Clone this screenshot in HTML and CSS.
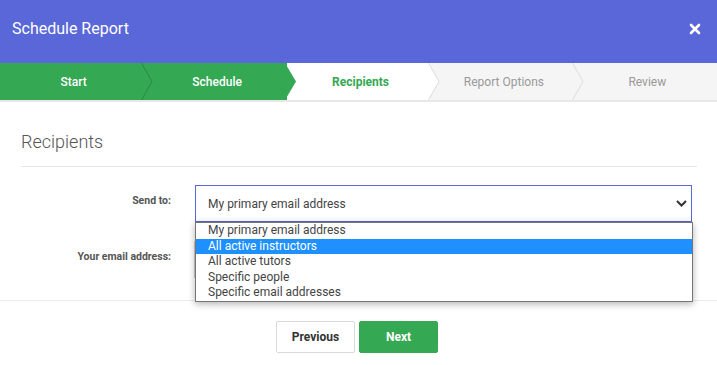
FILE: index.html
```html
<!DOCTYPE html>
<html lang="en">
<head>
<meta charset="utf-8">
<title>Schedule Report</title>
<link rel="stylesheet" href="styles.css">
</head>
<body>
<div class="modal">
  <header class="modal-header">
    <h1 class="modal-title">Schedule Report</h1>
    <button class="close" aria-label="Close">
      <svg width="12" height="12" viewBox="0 0 12 12"><path d="M2 2 L10 10 M10 2 L2 10" stroke="#fff" stroke-width="2.6" stroke-linecap="round"/></svg>
    </button>
  </header>

  <nav class="steps">
    <div class="step done">Start
      <svg class="sep" width="12" height="37" viewBox="0 0 12 37"><polyline points="0.5,0 11,18.5 0.5,37" fill="none" stroke="#2a8a43" stroke-width="1"/></svg>
    </div>
    <div class="step done">Schedule
      <svg class="sep" width="12" height="37" viewBox="0 0 12 37"><polygon points="0,0 11,18.5 0,37" fill="#34a853"/></svg>
    </div>
    <div class="step active">Recipients
      <svg class="sep" width="12" height="37" viewBox="0 0 12 37"><polygon points="0,0 11,18.5 0,37" fill="#fff"/><polyline points="0.5,0 11,18.5 0.5,37" fill="none" stroke="#dcdcdc" stroke-width="1"/></svg>
    </div>
    <div class="step todo">Report Options
      <svg class="sep" width="12" height="37" viewBox="0 0 12 37"><polyline points="0.5,0 11,18.5 0.5,37" fill="none" stroke="#dcdcdc" stroke-width="1"/></svg>
    </div>
    <div class="step todo">Review</div>
  </nav>

  <main class="content">
    <h2 class="section-title">Recipients</h2>
    <div class="form">
      <div class="row">
        <label class="label">Send to:</label>
        <div class="field">
          <div class="select">
            <span>My primary email address</span>
            <svg class="chev" width="11" height="7" viewBox="0 0 11 7"><polyline points="1,1 5.5,5.5 10,1" fill="none" stroke="#333" stroke-width="2"/></svg>
          </div>
          <ul class="dropdown">
            <li>My primary email address</li>
            <li class="hl">All active instructors</li>
            <li>All active tutors</li>
            <li>Specific people</li>
            <li>Specific email addresses</li>
          </ul>
        </div>
      </div>
      <div class="row">
        <label class="label">Your email address:</label>
        <div class="field">
          <div class="input"></div>
        </div>
      </div>
    </div>
  </main>

  <footer class="footer">
    <button class="btn btn-default">Previous</button>
    <button class="btn btn-primary">Next</button>
  </footer>
</div>
</body>
</html>
```

FILE: styles.css
```css
* { box-sizing: border-box; }
html, body { margin: 0; padding: 0; }
body {
  font-family: Roboto, "Liberation Sans", Arial, sans-serif;
  background: #fff;
  color: #333;
  width: 717px;
  height: 365px;
  overflow: hidden;
}
.modal-header {
  height: 63px;
  background: #5a67d8;
  display: flex;
  align-items: center;
  padding: 0 16px 6px 12px;
}
.modal-title {
  margin: 0;
  font-size: 16px;
  font-weight: 400;
  color: #fff;
  line-height: 20px;
}
.close {
  margin-left: auto;
  background: none;
  border: 0;
  padding: 0;
  width: 12px;
  height: 12px;
  display: flex;
}
.steps {
  display: flex;
  height: 39px;
  border-bottom: 2px solid #e8e8e8;
}
.step {
  flex: 1;
  position: relative;
  display: flex;
  align-items: center;
  justify-content: center;
  font-size: 12px;
  height: 37px;
  padding-left: 4px;
}
.step.done { background: #34a853; color: #fff; font-weight: 500; }
.step.active { background: #fff; color: #34a853; font-weight: 700; }
.step.todo { background: #f5f5f5; color: #999; font-weight: 400; }
.sep {
  position: absolute;
  top: 0;
  left: calc(100% - 2px);
  z-index: 1;
  display: block;
}
.content {
  padding: 29px 20px 0 21px;
  height: 198px;
}
.section-title {
  margin: 0;
  font-size: 18px;
  font-weight: 300;
  line-height: 22px;
  color: #555;
  padding-bottom: 13px;
  border-bottom: 1px solid #e6e6e6;
}
.form {
  padding-top: 18px;
  display: flex;
  flex-direction: column;
  gap: 19px;
  padding-right: 5px;
}
.row {
  display: flex;
  align-items: flex-start;
}
.label {
  width: 150px;
  flex: none;
  text-align: right;
  font-size: 10.5px;
  font-weight: 700;
  color: #555;
  line-height: 20px;
  padding-top: 6px;
  margin-right: 24px;
}
.field {
  flex: 1;
  position: relative;
}
.select {
  height: 37px;
  border: 1px solid #5a67d8;
  display: flex;
  align-items: center;
  padding: 0 4px 0 12px;
  font-size: 12px;
  color: #444;
  background: #fff;
}
.chev { margin-left: auto; margin-right: 0; }
.dropdown {
  position: absolute;
  left: 0;
  right: -1px;
  top: 37px;
  margin: 0;
  padding: 0;
  list-style: none;
  background: #fff;
  border: 1px solid #767676;
  box-shadow: 0 2px 7px rgba(0,0,0,0.3);
  z-index: 5;
  font-size: 12px;
  color: #444;
}
.dropdown li {
  height: 15.5px;
  line-height: 15.5px;
  padding-left: 12px;
  white-space: nowrap;
}
.dropdown li.hl { background: #1e90ff; color: #fff; }
.input {
  height: 37px;
  border: 1px solid #ccc;
  margin-left: -1px;
}
.footer {
  border-top: 1px solid #ececec;
  display: flex;
  justify-content: center;
  gap: 4px;
  padding-top: 20px;
  padding-right: 3px;
}
.btn {
  width: 79px;
  height: 32px;
  font-family: Roboto, "Liberation Sans", Arial, sans-serif;
  font-size: 12px;
  font-weight: 700;
  border-radius: 2px;
  cursor: pointer;
}
.btn-default {
  background: #fff;
  border: 1px solid #d9d9d9;
  color: #333;
}
.btn-primary {
  background: #34a853;
  border: 1px solid #34a853;
  color: #fff;
}
```
